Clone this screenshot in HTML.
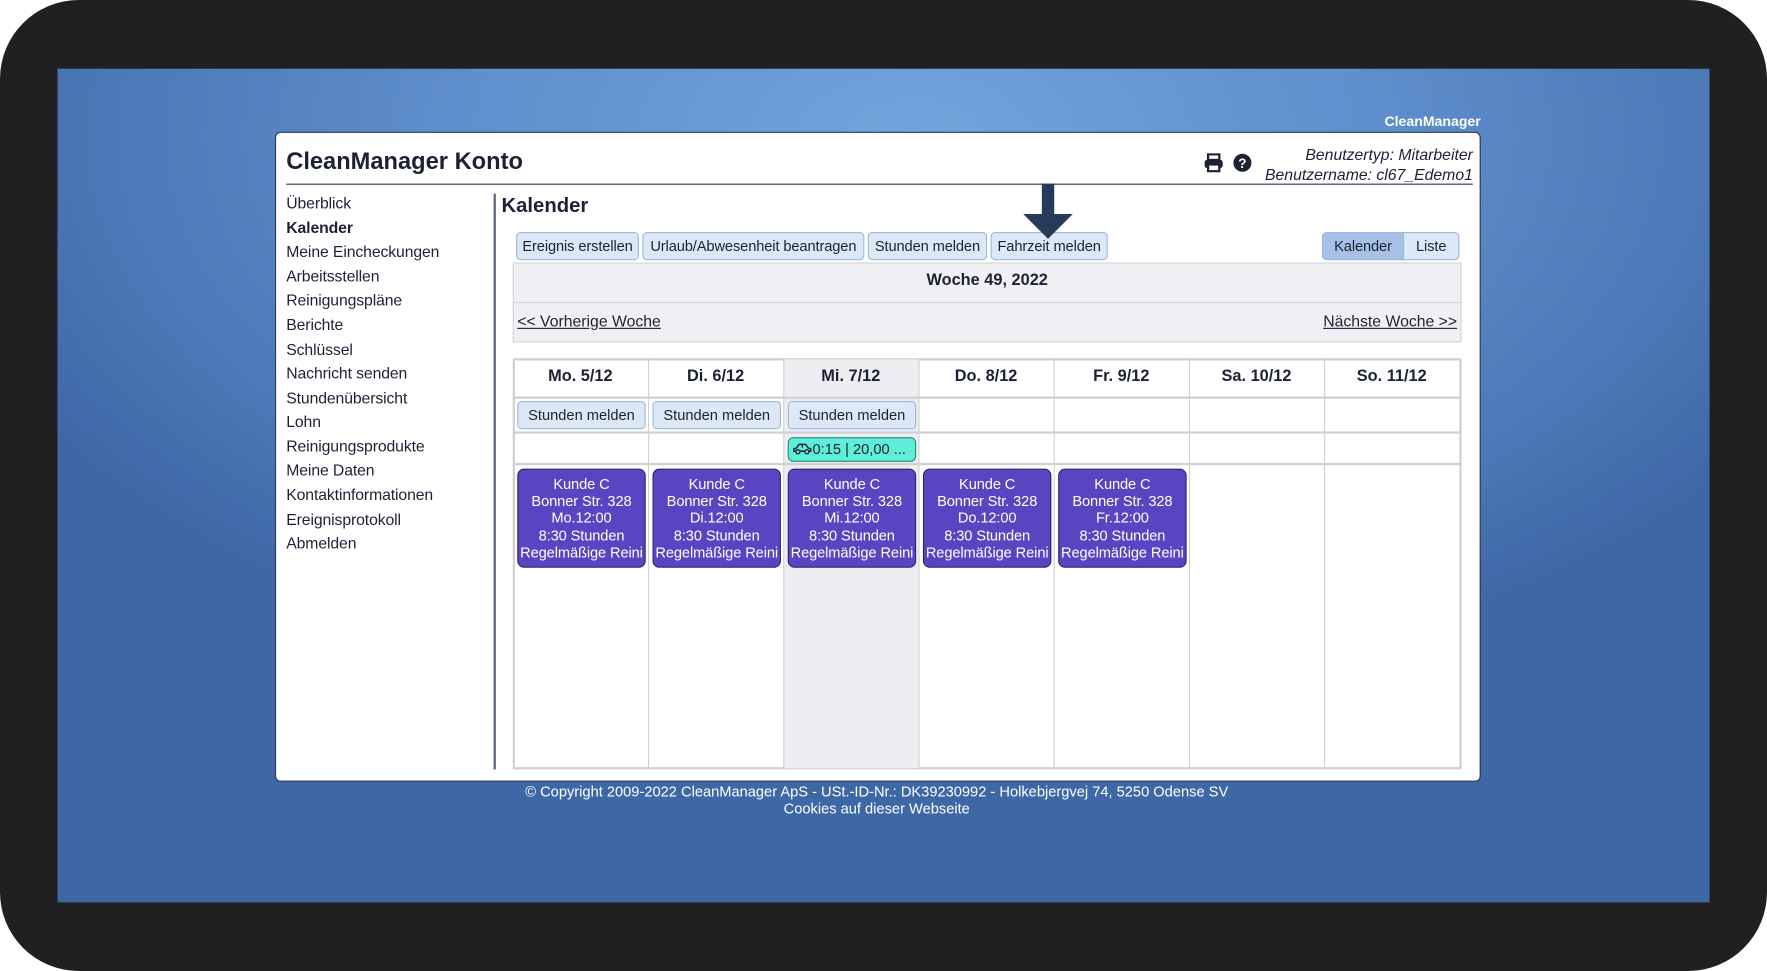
<!DOCTYPE html>
<html><head><meta charset="utf-8"><style>
*{margin:0;padding:0;box-sizing:border-box}
html,body{width:1767px;height:971px;overflow:hidden;background:#fff}
#s{position:absolute;left:0;top:0;width:1568px;height:862px;transform:scale(1.12691,1.1265);transform-origin:0 0;font-family:"Liberation Sans",Arial,sans-serif;color:#1c2233}
.a{position:absolute}
.frame{left:0;top:0;width:1568px;height:862px;background:#202022;border-radius:70px}
.blue{left:51px;top:61px;width:1466px;height:740px;background:radial-gradient(ellipse 900px 500px at 760px 60px,#74a4dc 0%,#5f8fcc 45%,#4b78b6 80%,#3e67a6 100%)}
.panel{left:244px;top:117px;width:1070px;height:577px;background:#fff;border:1px solid #2c3850;border-radius:5px}
.side div{position:absolute;left:254px;font-size:14px;letter-spacing:-0.1px}
.btn{position:absolute;top:206px;height:25px;background:#dce8f6;border:1px solid #9db8dc;border-radius:4px;font-size:13px;letter-spacing:-0.1px;text-align:center;line-height:23px;color:#1c2233;white-space:nowrap}
.col{position:absolute;top:318px;width:1px;height:364px;background:#d0d0d4}
.row{position:absolute;left:455px;width:841px;height:2px;background:#d0d0d4}
.hd{position:absolute;top:326px;width:120px;text-align:center;font-weight:bold;font-size:14.5px}
.ev{position:absolute;top:416px;width:114px;height:88px;background:#5a44c2;border:1px solid #2f2470;border-radius:6px;color:#fff;font-size:13px;letter-spacing:-0.1px;line-height:15.2px;text-align:center;padding-top:5px;white-space:nowrap;overflow:hidden}
.sm{position:absolute;top:356px;width:114px;height:25px;background:#dce8f6;border:1px solid #9db8dc;border-radius:4px;font-size:13px;text-align:center;line-height:23px}
</style></head><body><div id="s">
<div class="a frame"></div>
<div class="a blue"></div>
<div class="a" style="left:1150px;top:101px;width:164px;text-align:right;color:#fff;font-weight:bold;font-size:12.5px">CleanManager</div>
<div class="a panel"></div>
<div class="a" style="left:254px;top:132px;font-size:21px;font-weight:bold">CleanManager Konto</div>
<div class="a" style="left:254px;top:163px;width:1053px;height:1px;background:#2c3850"></div>
<svg class="a" style="left:1068px;top:136px" width="18" height="17" viewBox="0 0 18 17"><rect x="4" y="1" width="10" height="5" fill="none" stroke="#1c2233" stroke-width="2"/><rect x="1" y="6" width="16" height="7" rx="2" fill="#1c2233"/><rect x="4" y="10" width="10" height="6" fill="#fff" stroke="#1c2233" stroke-width="2"/></svg>
<svg class="a" style="left:1094px;top:136px" width="17" height="17" viewBox="0 0 17 17"><circle cx="8.5" cy="8.5" r="8" fill="#1c2233"/><text x="8.5" y="13" text-anchor="middle" fill="#fff" font-size="12" font-weight="bold" font-family="Liberation Sans">?</text></svg>
<div class="a" style="left:1050px;top:128px;width:257px;text-align:right;font-style:italic;font-size:14px;line-height:18px">Benutzertyp: Mitarbeiter<br>Benutzername: cl67_Edemo1</div>
<div class="side">
<div style="top:172px">Überblick</div><div style="top:194px;font-weight:bold">Kalender</div><div style="top:215px">Meine Eincheckungen</div><div style="top:237px">Arbeitsstellen</div><div style="top:258px">Reinigungspläne</div><div style="top:280px">Berichte</div><div style="top:302px">Schlüssel</div><div style="top:323px">Nachricht senden</div><div style="top:345px">Stundenübersicht</div><div style="top:366px">Lohn</div><div style="top:388px">Reinigungsprodukte</div><div style="top:409px">Meine Daten</div><div style="top:431px">Kontaktinformationen</div><div style="top:453px">Ereignisprotokoll</div><div style="top:474px">Abmelden</div>
</div>
<div class="a" style="left:438px;top:172px;width:2px;height:511px;background:#5a6478"></div>
<div class="a" style="left:445px;top:172px;font-size:18px;font-weight:bold">Kalender</div>
<div class="btn" style="left:458px;width:109px">Ereignis erstellen</div>
<div class="btn" style="left:570px;width:197px">Urlaub/Abwesenheit beantragen</div>
<div class="btn" style="left:770px;width:106px">Stunden melden</div>
<div class="btn" style="left:879px;width:104px">Fahrzeit melden</div>
<div class="btn" style="left:1173px;width:73px;background:#a6c0e6;border-radius:4px 0 0 4px">Kalender</div>
<div class="btn" style="left:1245px;width:50px;border-radius:0 4px 4px 0">Liste</div>
<svg class="a" style="left:907px;top:163px" width="46" height="50" viewBox="0 0 46 50"><rect x="17.5" y="0" width="11" height="28" fill="#263a5a"/><polygon points="1,27 45,27 23,49" fill="#263a5a"/></svg>
<div class="a" style="left:455px;top:233px;width:842px;height:71px;background:#f0f0f4;border:1px solid #d4d4d8"></div>
<div class="a" style="left:455px;top:268px;width:842px;height:1px;background:#d4d4d8"></div>
<div class="a" style="left:455px;top:241px;width:842px;text-align:center;font-weight:bold;font-size:14.5px">Woche 49, 2022</div>
<div class="a" style="left:459px;top:277px;font-size:14px;text-decoration:underline">&lt;&lt; Vorherige Woche</div>
<div class="a" style="left:1100px;top:277px;width:193px;text-align:right;font-size:14px;text-decoration:underline">Nächste Woche &gt;&gt;</div>
<div class="a" style="left:455px;top:318px;width:842px;height:365px;border:2px solid #d0d0d4;background:#fff"></div>
<div class="a" style="left:696px;top:319px;width:119px;height:363px;background:#eeeef2"></div>
<div class="col" style="left:575px"></div><div class="col" style="left:695px"></div><div class="col" style="left:815px"></div><div class="col" style="left:935px"></div><div class="col" style="left:1055px"></div><div class="col" style="left:1175px"></div>
<div class="row" style="top:352px"></div><div class="row" style="top:383px"></div><div class="row" style="top:411px"></div>
<div class="hd" style="left:455px">Mo. 5/12</div><div class="hd" style="left:575px">Di. 6/12</div><div class="hd" style="left:695px">Mi. 7/12</div><div class="hd" style="left:815px">Do. 8/12</div><div class="hd" style="left:935px">Fr. 9/12</div><div class="hd" style="left:1055px">Sa. 10/12</div><div class="hd" style="left:1175px">So. 11/12</div>
<div class="sm" style="left:459px">Stunden melden</div><div class="sm" style="left:579px">Stunden melden</div><div class="sm" style="left:699px">Stunden melden</div>
<div class="a" style="left:699px;top:388px;width:114px;height:22px;background:#5eeed8;border:1px solid #2a8a7a;border-radius:5px;font-size:13px;line-height:20px;padding-left:3px;white-space:nowrap"><svg width="18" height="11" viewBox="0 0 18 11" style="vertical-align:-1px"><path d="M1.5 7.5V5.5L4 4.5L6 1.5H12L14 4.5L16.5 5.5V7.5Z" fill="none" stroke="#1c2233" stroke-width="1.3"/><line x1="9" y1="1.5" x2="9" y2="4.5" stroke="#1c2233" stroke-width="1.2"/><circle cx="5" cy="8" r="1.8" fill="#5eeed8" stroke="#1c2233" stroke-width="1.2"/><circle cx="13" cy="8" r="1.8" fill="#5eeed8" stroke="#1c2233" stroke-width="1.2"/></svg>0:15 | 20,00 ...</div>
<div class="ev" style="left:459px">Kunde C<br>Bonner Str. 328<br>Mo.12:00<br>8:30 Stunden<br>Regelmäßige Reini</div>
<div class="ev" style="left:579px">Kunde C<br>Bonner Str. 328<br>Di.12:00<br>8:30 Stunden<br>Regelmäßige Reini</div>
<div class="ev" style="left:699px">Kunde C<br>Bonner Str. 328<br>Mi.12:00<br>8:30 Stunden<br>Regelmäßige Reini</div>
<div class="ev" style="left:819px">Kunde C<br>Bonner Str. 328<br>Do.12:00<br>8:30 Stunden<br>Regelmäßige Reini</div>
<div class="ev" style="left:939px">Kunde C<br>Bonner Str. 328<br>Fr.12:00<br>8:30 Stunden<br>Regelmäßige Reini</div>
<div class="a" style="left:380px;top:695px;width:796px;text-align:center;color:#fff;font-size:13px;line-height:15px">© Copyright 2009-2022 CleanManager ApS - USt.-ID-Nr.: DK39230992 - Holkebjergvej 74, 5250 Odense SV<br>Cookies auf dieser Webseite</div>
</div></body></html>
